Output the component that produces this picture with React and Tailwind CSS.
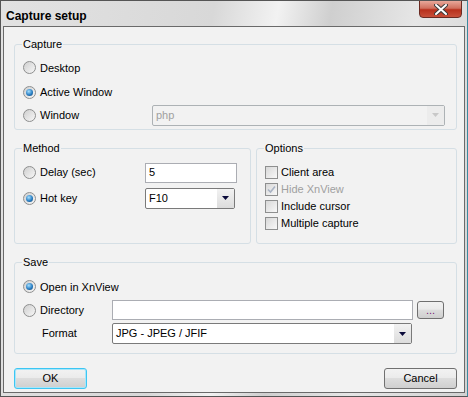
import React from 'react'

const font = { fontFamily: '"Liberation Sans", Arial, sans-serif' }

function Radio({ checked }) {
  return (
    <span className="w-[13px] h-[13px] rounded-full border border-[#8e8f8f] bg-[linear-gradient(135deg,#cfcfcf,#f7f7f7)] flex items-center justify-center shrink-0">
      {checked && (
        <span className="w-[7px] h-[7px] rounded-full bg-[radial-gradient(circle_at_40%_35%,#a6e0ff,#2a7fc4_55%,#0b3c6a)]" />
      )}
    </span>
  )
}

function Check({ checked, disabled }) {
  return (
    <span className="w-[13px] h-[13px] border border-[#8e8f8f] bg-[linear-gradient(135deg,#d8d8d8,#f8f8f8)] flex items-center justify-center shrink-0">
      {checked && (
        <svg width="9" height="9" viewBox="0 0 9 9">
          <path d="M1 4.5 L3.5 7 L8 1.5" fill="none" stroke={disabled ? '#a9b3c4' : '#1c3f8a'} strokeWidth="1.6" />
        </svg>
      )}
    </span>
  )
}

function Option({ checked, children, className = '' }) {
  return (
    <div className={`flex items-center gap-[4px] ${className}`}>
      <Radio checked={checked} />
      <span>{children}</span>
    </div>
  )
}

function Arrow({ color = '#0a0a3a' }) {
  return (
    <svg width="7" height="4" viewBox="0 0 7 4">
      <path d="M0 0 H7 L3.5 4 Z" fill={color} />
    </svg>
  )
}

function Combo({ value, className = '', disabled }) {
  return (
    <div className={`flex h-[21px] border ${disabled ? 'border-[#adb2b5] text-[#a0a0a0]' : 'border-[#7a7a7a] bg-white'} rounded-[2px] ${className}`}>
      <span className="flex-1 px-[3px] flex items-center">{value}</span>
      <span className={`w-[17px] flex items-center justify-center ${disabled ? 'bg-[#ececec]' : 'bg-[linear-gradient(#f2f2f2,#dcdcdc)]'}`}>
        <Arrow color={disabled ? '#c8c8c8' : '#0a0a3a'} />
      </span>
    </div>
  )
}

function Group({ title, className = '', children }) {
  return (
    <fieldset className={`border border-[#d5dfe5] rounded-[3px] pl-[8px] pr-2 ${className}`}>
      <legend className="px-[1px] ml-[-1px] text-[#000]">{title}</legend>
      {children}
    </fieldset>
  )
}

function Button({ children, focused }) {
  return (
    <button className={`w-[73px] h-[21px] rounded-[3px] border ${focused ? 'border-[#3cc6f3] shadow-[inset_0_0_0_1px_#a8e6fa]' : 'border-[#707070]'} bg-[linear-gradient(#f2f2f2_0%,#ebebeb_45%,#dddddd_50%,#cfcfcf_100%)] text-[11px]`}>
      {children}
    </button>
  )
}

export default function App() {
  return (
    <div
      style={font}
      className="w-[468px] h-[397px] border border-[#555] border-r-[#3a8ba0] bg-[linear-gradient(100deg,#e2e2e2_0%,#d8d8d8_40%,#f2f2f2_52%,#cfcfcf_62%,#e6e6e6_78%,#d2d2d2_100%)] flex flex-col text-[11px] text-black overflow-hidden"
    >
      {/* Title bar */}
      <div className="h-[25px] flex items-start justify-between shrink-0">
        <span className="font-bold text-[12px] pl-[5px] pt-[6px]">Capture setup</span>
        <div className="w-[43px] h-[18px] mr-[5px] mt-[-1px] rounded-b-[4px] border border-[#6b2a22] bg-[linear-gradient(#e8a89a_0%,#d0705e_45%,#b8301c_55%,#c8503a_100%)] flex items-center justify-center">
          <svg width="14" height="11" viewBox="0 0 14 11">
            <path d="M2 1 L12 10 M12 1 L2 10" stroke="#3c3c3c" strokeWidth="4" strokeLinecap="round" />
            <path d="M2 1 L12 10 M12 1 L2 10" stroke="#fff" strokeWidth="2" strokeLinecap="round" />
          </svg>
        </div>
      </div>

      {/* Client area */}
      <div className="flex-1 mx-[2px] mb-[3px] border border-[#6a6a6a] bg-[#f2f2f2] px-[10px] pt-[9px] flex flex-col">
        <Group title="Capture" className="h-[94px] mr-[-3px]">
          <div className="flex flex-col pt-[7px]">
            <Option>Desktop</Option>
            <Option checked className="mt-[8px]">Active Window</Option>
            <div className="flex items-center mt-[4px]">
              <Option className="w-[129px]">Window</Option>
              <Combo value="php" disabled className="w-[293px] h-[20px]" />
            </div>
          </div>
        </Group>

        <div className="flex mt-[10px] gap-[5px] mr-[-3px]">
          <Group title="Method" className="w-[237px] h-[104px]">
            <div className="flex flex-col pt-[6px]">
              <div className="flex items-center">
                <Option className="w-[122px]">Delay (sec)</Option>
                <div className="w-[92px] h-[20px] border border-[#abadb3] bg-white px-[3px] flex items-center">5</div>
              </div>
              <div className="flex items-center mt-[5px]">
                <Option checked className="w-[122px]">Hot key</Option>
                <Combo value="F10" className="w-[90px]" />
              </div>
            </div>
          </Group>
          <Group title="Options" className="flex-1 h-[104px] pl-[5px]">
            <div className="flex flex-col pt-[9px] gap-[4px]">
              <label className="flex items-center gap-[3px] leading-[13px]"><Check />Client area</label>
              <label className="flex items-center gap-[3px] leading-[13px] text-[#a0a0a0]"><Check checked disabled />Hide XnView</label>
              <label className="flex items-center gap-[3px] leading-[13px]"><Check />Include cursor</label>
              <label className="flex items-center gap-[3px] leading-[13px]"><Check />Multiple capture</label>
            </div>
          </Group>
        </div>

        <Group title="Save" className="h-[100px] mt-[10px] mr-[-3px]">
          <div className="flex flex-col pt-[8px]">
            <Option checked>Open in XnView</Option>
            <div className="flex items-center mt-[5px]">
              <Option className="w-[89px]">Directory</Option>
              <div className="w-[301px] h-[20px] border border-[#abadb3] bg-white" />
              <button className="ml-[4px] w-[27px] h-[18px] rounded-[3px] border border-[#707070] bg-[linear-gradient(#f2f2f2_0%,#ebebeb_45%,#dddddd_50%,#cfcfcf_100%)] text-[#7a1a7a] leading-[8px]">...</button>
            </div>
            <div className="flex items-center mt-[3px]">
              <span className="w-[89px] pl-[19px]">Format</span>
              <Combo value="JPG - JPEG / JFIF" className="w-[300px]" />
            </div>
          </div>
        </Group>

        <div className="flex justify-between mt-[14px] mr-[-3px]">
          <Button focused>OK</Button>
          <Button>Cancel</Button>
        </div>
      </div>
    </div>
  )
}
